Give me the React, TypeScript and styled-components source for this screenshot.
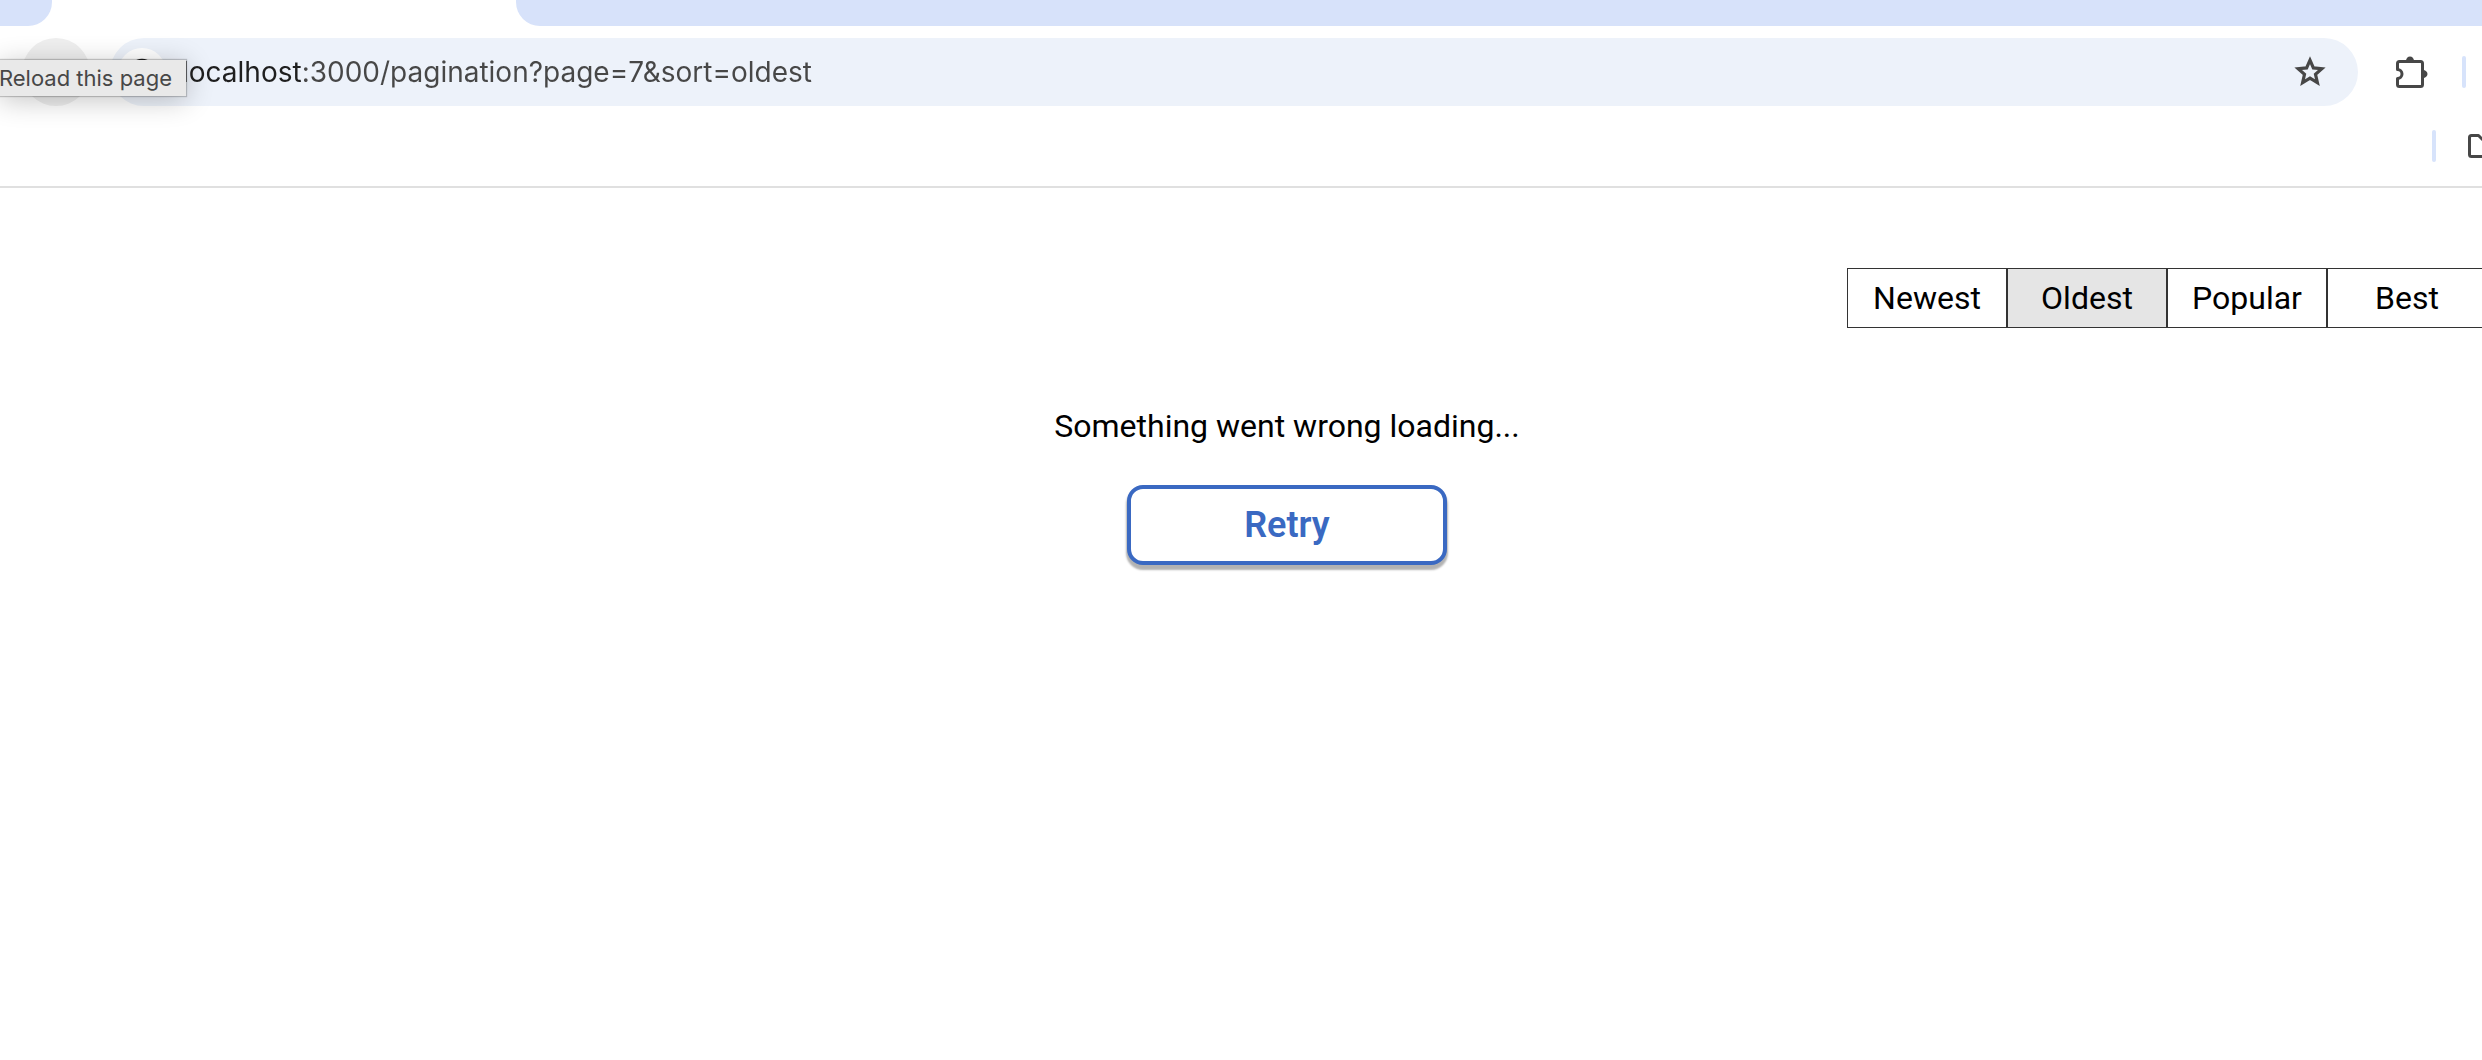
import React, { useState } from 'react';
import styled, { createGlobalStyle } from 'styled-components';

const chromeFont = "Inter, 'Liberation Sans', sans-serif";
const pageFont = "Roboto, 'Liberation Sans', sans-serif";

const GlobalStyle = createGlobalStyle`
  *, *::before, *::after { box-sizing: border-box; }
  body {
    margin: 0;
    background: #fff;
    color: #000;
    font-family: ${pageFont};
    overflow-x: hidden;
  }
  button, input { font: inherit; }
`;

const Browser = styled.header`
  position: relative;
  overflow: hidden;
  border-bottom: 2px solid #e0e0e0;
  font-family: ${chromeFont};
`;

const TabStrip = styled.div`
  display: grid;
  grid-template-columns: 52px 464px 1fr;
  height: 26px;
`;

const TabSpace = styled.div<{ $side: 'left' | 'right' }>`
  grid-column: ${(p) => (p.$side === 'left' ? 1 : 3)};
  background: #d7e2fa;
  border-radius: ${(p) => (p.$side === 'left' ? '0 0 24px 0' : '0 0 0 24px')};
`;

const Toolbar = styled.div`
  display: flex;
  align-items: center;
  padding: 12px 16px 12px 22px;
`;

const RoundButton = styled.button<{ $size: number; $fill?: string }>`
  flex: none;
  display: grid;
  place-items: center;
  width: ${(p) => p.$size}px;
  height: ${(p) => p.$size}px;
  padding: 0;
  border: 0;
  border-radius: 50%;
  background: ${(p) => p.$fill ?? 'transparent'};
  color: #474747;
`;

const Omnibox = styled.div`
  flex: 1;
  display: flex;
  align-items: center;
  height: 68px;
  margin: 0 20px;
  padding: 0 24px 0 8px;
  border-radius: 34px;
  background: #edf2fa;
`;

/* The host part of the address is darker than the path after it. */
const Address = styled.input`
  flex: 1;
  min-width: 0;
  margin-left: 16px;
  padding: 0;
  border: 0;
  outline: 0;
  font-size: 28px;
  line-height: 36px;
  color: #474747;
  background: linear-gradient(90deg, #1f1f1f 121px, #474747 121px);
  -webkit-background-clip: text;
  background-clip: text;
  -webkit-text-fill-color: transparent;
`;

const Divider = styled.span`
  flex: none;
  width: 4px;
  height: 32px;
  border-radius: 2px;
  background: #d7e3fb;
`;

const ToolbarDivider = styled(Divider)`
  margin-left: 16px;
`;

const BookmarksBar = styled.div`
  display: flex;
  justify-content: flex-end;
  gap: 28px;
  padding: 12px 0 24px;
  margin-right: -14px;
`;

const Tooltip = styled.div`
  position: absolute;
  top: 60px;
  left: 0;
  display: flex;
  justify-content: flex-end;
  width: 186px;
  height: 36px;
  padding-right: 14px;
  background: #e9e9e9;
  box-shadow: 0 0 1px 1px rgba(0, 0, 0, 0.2), 0 4px 28px rgba(0, 0, 0, 0.24);
  color: #474747;
  font-size: 22px;
  line-height: 36px;
  white-space: nowrap;
`;

/* The page is wider than the visible area and runs past its right edge. */
const Page = styled.main`
  margin-right: -92px;
  padding: 80px 0;
`;

const SortGroup = styled.div`
  display: flex;
  justify-content: flex-end;
  padding-right: 87px;
`;

const SortButton = styled.button<{ $active: boolean }>`
  width: 160px;
  height: 60px;
  padding: 0;
  border: 1px solid #333;
  border-radius: 0;
  background: ${(p) => (p.$active ? '#e5e5e5' : '#fff')};
  color: #000;
  font-size: 32px;
  line-height: 36px;
`;

const ErrorPanel = styled.section`
  display: flex;
  flex-direction: column;
  align-items: center;
  gap: 41px;
  margin-top: 80px;
`;

const Message = styled.p`
  margin: 0;
  font-size: 32px;
  line-height: 36px;
`;

const RetryButton = styled.button`
  width: 320px;
  height: 80px;
  padding: 0;
  border: 4px solid #3a69c2;
  border-radius: 16px;
  background: #fff;
  box-shadow: 0 4px 2px 1px rgba(0, 0, 0, 0.3);
  color: #3a69c2;
  font-size: 36px;
  font-weight: 600;
  line-height: 40px;
`;

const sorts = ['Newest', 'Oldest', 'Popular', 'Best'];

function SiteInfoIcon() {
  return (
    <svg width="28" height="28" viewBox="0 0 28 28" fill="none" stroke="#1f1f1f" strokeWidth="2.5" aria-hidden>
      <circle cx="14" cy="14" r="12" />
      <path d="M14 13v7M14 8v2.5" />
    </svg>
  );
}

function StarIcon() {
  return (
    <svg width="48" height="48" viewBox="0 0 48 48" fill="none" stroke="currentColor" strokeWidth="3.2" aria-hidden>
      <path d="M24 12.2 27.4 19.9 35.8 20.7 29.5 26.3 31.4 34.6 24 30.2 16.6 34.6 18.5 26.3 12.2 20.7 20.6 19.9Z" />
    </svg>
  );
}

function ExtensionsIcon() {
  return (
    <svg width="32" height="32" viewBox="0 0 32 32" aria-hidden>
      <path
        fill="none"
        stroke="currentColor"
        strokeWidth="3"
        strokeLinejoin="round"
        d="M3.5 5.5H24.5Q26.5 5.5 26.5 7.5V28.5Q26.5 30.5 24.5 30.5H3.5Q1.5 30.5 1.5 28.5V22.5A4.5 4.5 0 0 0 1.5 13.5V7.5Q1.5 5.5 3.5 5.5Z"
      />
      <path fill="currentColor" d="M10 5a4 4.5 0 0 1 8 0ZM27 14a4.5 4 0 0 1 0 8Z" />
    </svg>
  );
}

function FolderIcon() {
  return (
    <svg width="32" height="32" viewBox="0 0 32 32" fill="none" stroke="#474747" strokeWidth="3" strokeLinejoin="round" aria-hidden>
      <path d="M7.5 5.5H14.5L18.5 9.5H28.5Q30.5 9.5 30.5 11.5V24.5Q30.5 26.5 28.5 26.5H7.5Q5.5 26.5 5.5 24.5V7.5Q5.5 5.5 7.5 5.5Z" />
    </svg>
  );
}

export default function App() {
  const [sort, setSort] = useState('Oldest');
  const [address, setAddress] = useState('localhost:3000/pagination?page=7&sort=oldest');

  return (
    <>
      <GlobalStyle />
      <Browser>
        <TabStrip>
          <TabSpace $side="left" />
          <TabSpace $side="right" />
        </TabStrip>
        <Toolbar>
          <RoundButton $size={68} $fill="#efefef" aria-label="Reload this page" aria-describedby="reload-tip" />
          <Omnibox>
            <RoundButton $size={48} $fill="#fff" aria-label="View site information">
              <SiteInfoIcon />
            </RoundButton>
            <Address
              type="text"
              aria-label="Address"
              spellCheck={false}
              value={address}
              onChange={(e) => setAddress(e.target.value)}
            />
            <RoundButton $size={48} aria-label="Bookmark this page">
              <StarIcon />
            </RoundButton>
          </Omnibox>
          <RoundButton $size={68} aria-label="Extensions">
            <ExtensionsIcon />
          </RoundButton>
          <ToolbarDivider />
        </Toolbar>
        <BookmarksBar>
          <Divider />
          <FolderIcon />
        </BookmarksBar>
        <Tooltip id="reload-tip" role="tooltip">Reload this page</Tooltip>
      </Browser>
      <Page>
        <SortGroup role="group" aria-label="Sort by">
          {sorts.map((name) => (
            <SortButton key={name} type="button" $active={name === sort} aria-pressed={name === sort} onClick={() => setSort(name)}>
              {name}
            </SortButton>
          ))}
        </SortGroup>
        <ErrorPanel>
          <Message role="alert">Something went wrong loading...</Message>
          <RetryButton type="button">Retry</RetryButton>
        </ErrorPanel>
      </Page>
    </>
  );
}
